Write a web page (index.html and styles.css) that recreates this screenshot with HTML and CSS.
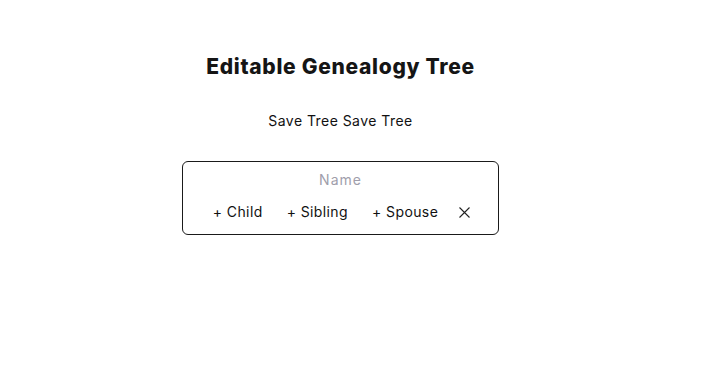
FILE: index.html
```html
<!DOCTYPE html>
<html lang="en">
<head>
<meta charset="utf-8">
<title>Editable Genealogy Tree</title>
<link rel="stylesheet" href="styles.css">
</head>
<body>
<main class="page">
  <h1 class="title">Editable Genealogy Tree</h1>
  <div class="actions">Save Tree Save Tree</div>
  <div class="card">
    <div class="name">Name</div>
    <div class="row">
      <span class="btn">+ Child</span>
      <span class="btn">+ Sibling</span>
      <span class="btn">+ Spouse</span>
      <span class="btn close"><svg width="11" height="11" viewBox="0 0 11 11"><path d="M0.5 0.5L10.5 10.5M10.5 0.5L0.5 10.5" stroke="#222" stroke-width="1.1" fill="none"/></svg></span>
    </div>
  </div>
</main>
</body>
</html>
```
FILE: styles.css
```css
html, body { margin: 0; padding: 0; background: #fff; }
body { font-family: "Inter", "Noto Sans", sans-serif; color: #111; }
.page { width: 681px; padding-top: 52px; display: flex; flex-direction: column; align-items: center; }
.title { margin: 0; font-size: 21px; line-height: 30px; font-weight: 800; color: #151515; letter-spacing: 0.7px; }
.actions { margin-top: 29px; font-size: 14px; line-height: 20px; color: #111; letter-spacing: 0.45px; }
.card { margin-top: 30px; width: 315px; border: 1px solid #1a1a1a; border-radius: 6px; padding: 8px 0 12px; display: flex; flex-direction: column; align-items: center; gap: 12px; }
.name { font-size: 14px; line-height: 20px; color: #a09eab; letter-spacing: 1px; }
.row { display: flex; align-items: center; font-size: 14px; line-height: 20px; color: #111; letter-spacing: 0.4px; }
.btn { padding: 0 12px; }
.close { display: flex; align-items: center; padding: 0 10px 0 9px; }
```
